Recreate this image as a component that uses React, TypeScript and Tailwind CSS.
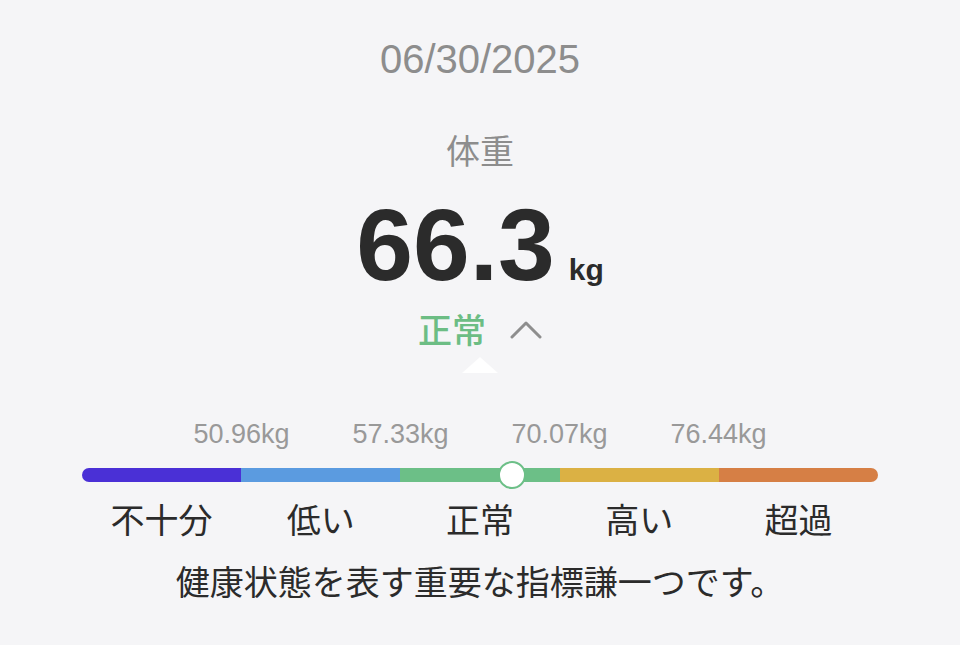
import React from "react";

const segments = ["bg-[#4a30d6]", "bg-[#5b9be0]", "bg-[#6cbf87]", "bg-[#dbb144]", "bg-[#d67f45]"];
const limits = ["50.96kg", "57.33kg", "70.07kg", "76.44kg"];
const levels = ["不十分", "低い", "正常", "高い", "超過"];

export default function App() {
  return (
    <div
      className="w-full h-[645px] bg-[#f5f5f7] flex flex-col items-center overflow-hidden"
      style={{ fontFamily: '"Liberation Sans", "Noto Sans CJK JP", sans-serif' }}
    >
      <div className="mt-[39px] text-[40px] leading-[40px] text-[#8d8d8d]">06/30/2025</div>

      <div className="mt-[57px] text-[34px] leading-[33px] text-[#8d8d8d]">体重</div>

      <div className="mt-[25px] flex items-baseline text-[#2b2b2b] font-bold">
        <span className="text-[102px] leading-none">66.3</span>
        <span className="ml-[14px] text-[30px] leading-none">kg</span>
      </div>

      <div className="mt-[19px] flex items-center gap-[24px]">
        <span className="text-[34px] leading-[33px] font-medium text-[#6cbd84]">正常</span>
        <svg width="32" height="20" viewBox="0 0 32 20" className="mt-[-4px]">
          <polyline points="2,17 16,3 30,17" fill="none" stroke="#8e8e8e" strokeWidth="3" strokeLinecap="round" strokeLinejoin="round" />
        </svg>
      </div>

      <div className="mt-[9px] w-0 h-0 border-l-[18px] border-r-[18px] border-b-[16px] border-l-transparent border-r-transparent border-b-white" />

      <div className="mt-[48px] w-[796px] flex justify-center">
        {limits.map((l) => (
          <div key={l} className="w-[159px] text-center text-[27px] leading-[27px] text-[#999999]">
            {l}
          </div>
        ))}
      </div>

      <div className="mt-[20px] relative w-[796px] h-[14px]">
        <div className="flex h-full rounded-full overflow-hidden">
          {segments.map((c) => (
            <div key={c} className={`flex-1 ${c}`} />
          ))}
        </div>
        <div className="absolute left-[416px] top-[-7px] w-[28px] h-[28px] rounded-full bg-white border-[2.5px] border-[#6cbf87]" />
      </div>

      <div className="mt-[23px] w-[796px] grid grid-cols-5">
        {levels.map((l) => (
          <div key={l} className="text-center text-[34px] leading-[33px] text-[#2b2b2b]">
            {l}
          </div>
        ))}
      </div>

      <div className="mt-[29px] text-[34px] leading-[33px] text-[#2b2b2b]">健康状態を表す重要な指標謙一つです。</div>
    </div>
  );
}
